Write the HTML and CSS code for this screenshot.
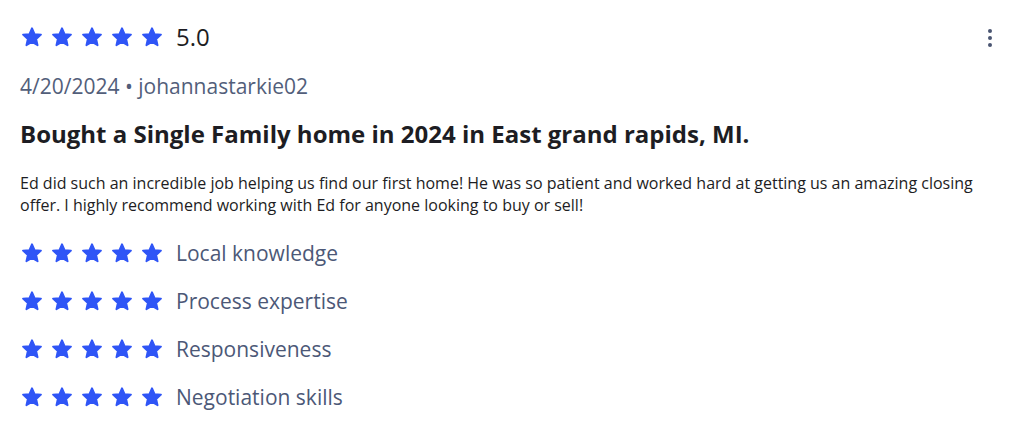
FILE: index.html
```html
<!DOCTYPE html>
<html>
<head>
<meta charset="utf-8">
<link rel="stylesheet" href="styles.css">
</head>
<body>
<svg width="0" height="0" class="defs">
  <defs>
    <symbol id="star" viewBox="0 0 24 24">
      <path d="M12 3.2 L14.6 9.1 L21 9.7 L16.2 14 L17.6 20.3 L12 17 L6.4 20.3 L7.8 14 L3 9.7 L9.4 9.1 Z" fill="currentColor" stroke="currentColor" stroke-width="1.8" stroke-linejoin="round"/>
    </symbol>
  </defs>
</svg>
<div class="review">
  <div class="top">
    <div class="rating">
      <div class="stars">
        <svg class="star"><use href="#star"/></svg>
        <svg class="star"><use href="#star"/></svg>
        <svg class="star"><use href="#star"/></svg>
        <svg class="star"><use href="#star"/></svg>
        <svg class="star"><use href="#star"/></svg>
      </div>
      <span class="score">5.0</span>
    </div>
    <button class="more" aria-label="More options">
      <span class="dot"></span><span class="dot"></span><span class="dot"></span>
    </button>
  </div>
  <div class="meta">4/20/2024 • johannastarkie02</div>
  <h2 class="title">Bought a Single Family home in 2024 in East grand rapids, MI.</h2>
  <p class="body">Ed did such an incredible job helping us find our first home! He was so patient and worked hard at getting us an amazing closing offer. I highly recommend working with Ed for anyone looking to buy or sell!</p>
  <ul class="criteria">
    <li class="crit">
      <div class="stars">
        <svg class="star"><use href="#star"/></svg>
        <svg class="star"><use href="#star"/></svg>
        <svg class="star"><use href="#star"/></svg>
        <svg class="star"><use href="#star"/></svg>
        <svg class="star"><use href="#star"/></svg>
      </div>
      <span class="label">Local knowledge</span>
    </li>
    <li class="crit">
      <div class="stars">
        <svg class="star"><use href="#star"/></svg>
        <svg class="star"><use href="#star"/></svg>
        <svg class="star"><use href="#star"/></svg>
        <svg class="star"><use href="#star"/></svg>
        <svg class="star"><use href="#star"/></svg>
      </div>
      <span class="label">Process expertise</span>
    </li>
    <li class="crit">
      <div class="stars">
        <svg class="star"><use href="#star"/></svg>
        <svg class="star"><use href="#star"/></svg>
        <svg class="star"><use href="#star"/></svg>
        <svg class="star"><use href="#star"/></svg>
        <svg class="star"><use href="#star"/></svg>
      </div>
      <span class="label">Responsiveness</span>
    </li>
    <li class="crit">
      <div class="stars">
        <svg class="star"><use href="#star"/></svg>
        <svg class="star"><use href="#star"/></svg>
        <svg class="star"><use href="#star"/></svg>
        <svg class="star"><use href="#star"/></svg>
        <svg class="star"><use href="#star"/></svg>
      </div>
      <span class="label">Negotiation skills</span>
    </li>
  </ul>
</div>
</body>
</html>
```
FILE: styles.css
```css
html, body {
  margin: 0;
  padding: 0;
  background: #ffffff;
}
body {
  font-family: "Open Sans", "Liberation Sans", sans-serif;
  color: #1d1d23;
}
.defs {
  position: absolute;
  width: 0;
  height: 0;
  overflow: hidden;
}
.review {
  padding: 23px 28px 0 20px;
}
.top {
  display: flex;
  justify-content: space-between;
  align-items: center;
  height: 28px;
}
.rating {
  display: flex;
  align-items: center;
  gap: 12px;
}
.stars {
  display: flex;
  gap: 6px;
  color: #2f55f6;
}
.star {
  width: 24px;
  height: 24px;
  display: block;
}
.score {
  font-size: 24px;
  line-height: 28px;
  color: #1d1d23;
}
.more {
  border: 0;
  background: none;
  padding: 0;
  width: 8px;
  display: flex;
  flex-direction: column;
  align-items: center;
  gap: 3px;
  margin-right: -1px;
  margin-top: 2px;
}
.dot {
  width: 4px;
  height: 4px;
  border-radius: 50%;
  background: #4a5572;
}
.meta {
  margin-top: 21px;
  font-size: 21px;
  line-height: 28px;
  color: #525e7a;
}
.title {
  margin: 18px 0 0 0;
  font-size: 24px;
  line-height: 32px;
  font-weight: 700;
  color: #1d1d23;
}
.body {
  margin: 22px 0 0 0;
  font-size: 16px;
  line-height: 22px;
  color: #1d1d23;
}
.criteria {
  list-style: none;
  margin: 23px 0 0 0;
  padding: 0;
  display: flex;
  flex-direction: column;
  gap: 20px;
}
.crit {
  display: flex;
  align-items: center;
  gap: 12px;
  height: 28px;
}
.label {
  font-size: 21px;
  line-height: 28px;
  color: #4c5877;
}
```
